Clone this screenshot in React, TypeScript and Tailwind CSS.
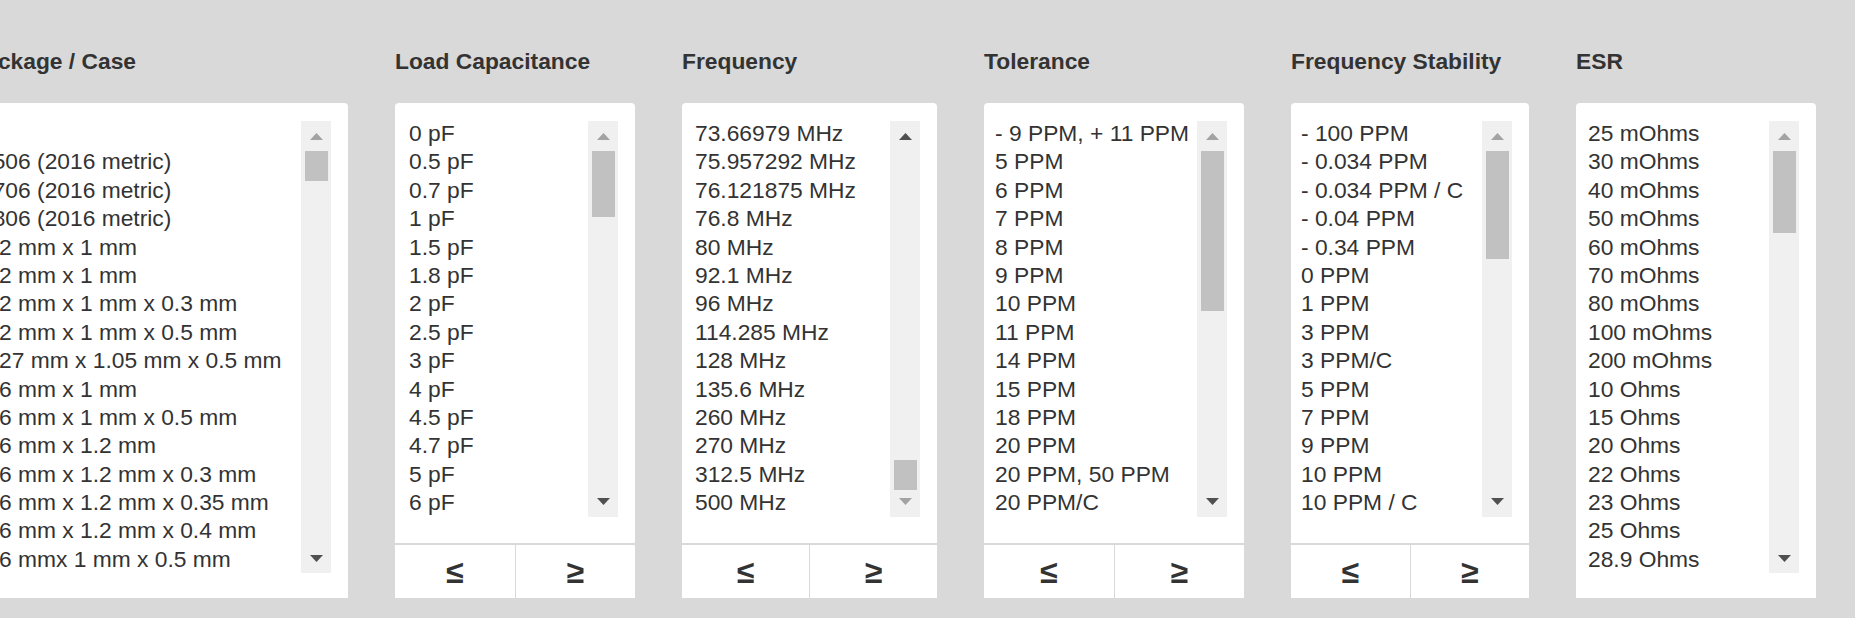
import React from 'react';

type Column = {
    title: string;
    width: number;
    padLeft: number;
    items: string[];
    buttons: boolean;
    thumbTop: number;
    thumbHeight: number;
    upActive: boolean;
    downActive: boolean;
};

const ROW = 28.4;

const columns: Column[] = [
    {
        title: 'Package / Case',
        width: 378,
        padLeft: 10,
        buttons: false,
        thumbTop: 30,
        thumbHeight: 30,
        upActive: false,
        downActive: true,
        items: [
            '-',
            '0506 (2016 metric)',
            '0706 (2016 metric)',
            '0806 (2016 metric)',
            '1.2 mm x 1 mm',
            '1.2 mm x 1 mm',
            '1.2 mm x 1 mm x 0.3 mm',
            '1.2 mm x 1 mm x 0.5 mm',
            '1.27 mm x 1.05 mm x 0.5 mm',
            '1.6 mm x 1 mm',
            '1.6 mm x 1 mm x 0.5 mm',
            '1.6 mm x 1.2 mm',
            '1.6 mm x 1.2 mm x 0.3 mm',
            '1.6 mm x 1.2 mm x 0.35 mm',
            '1.6 mm x 1.2 mm x 0.4 mm',
            '1.6 mmx 1 mm x 0.5 mm',
        ],
    },
    {
        title: 'Load Capacitance',
        width: 240,
        padLeft: 14,
        buttons: true,
        thumbTop: 30,
        thumbHeight: 66,
        upActive: false,
        downActive: true,
        items: ['0 pF', '0.5 pF', '0.7 pF', '1 pF', '1.5 pF', '1.8 pF', '2 pF', '2.5 pF', '3 pF', '4 pF', '4.5 pF', '4.7 pF', '5 pF', '6 pF'],
    },
    {
        title: 'Frequency',
        width: 255,
        padLeft: 13,
        buttons: true,
        thumbTop: 339,
        thumbHeight: 30,
        upActive: true,
        downActive: false,
        items: [
            '73.66979 MHz',
            '75.957292 MHz',
            '76.121875 MHz',
            '76.8 MHz',
            '80 MHz',
            '92.1 MHz',
            '96 MHz',
            '114.285 MHz',
            '128 MHz',
            '135.6 MHz',
            '260 MHz',
            '270 MHz',
            '312.5 MHz',
            '500 MHz',
        ],
    },
    {
        title: 'Tolerance',
        width: 260,
        padLeft: 11,
        buttons: true,
        thumbTop: 30,
        thumbHeight: 160,
        upActive: false,
        downActive: true,
        items: [
            '- 9 PPM, + 11 PPM',
            '5 PPM',
            '6 PPM',
            '7 PPM',
            '8 PPM',
            '9 PPM',
            '10 PPM',
            '11 PPM',
            '14 PPM',
            '15 PPM',
            '18 PPM',
            '20 PPM',
            '20 PPM, 50 PPM',
            '20 PPM/C',
        ],
    },
    {
        title: 'Frequency Stability',
        width: 238,
        padLeft: 10,
        buttons: true,
        thumbTop: 30,
        thumbHeight: 108,
        upActive: false,
        downActive: true,
        items: [
            '- 100 PPM',
            '- 0.034 PPM',
            '- 0.034 PPM / C',
            '- 0.04 PPM',
            '- 0.34 PPM',
            '0 PPM',
            '1 PPM',
            '3 PPM',
            '3 PPM/C',
            '5 PPM',
            '7 PPM',
            '9 PPM',
            '10 PPM',
            '10 PPM / C',
        ],
    },
    {
        title: 'ESR',
        width: 240,
        padLeft: 12,
        buttons: false,
        thumbTop: 30,
        thumbHeight: 82,
        upActive: false,
        downActive: true,
        items: [
            '25 mOhms',
            '30 mOhms',
            '40 mOhms',
            '50 mOhms',
            '60 mOhms',
            '70 mOhms',
            '80 mOhms',
            '100 mOhms',
            '200 mOhms',
            '10 Ohms',
            '15 Ohms',
            '20 Ohms',
            '22 Ohms',
            '23 Ohms',
            '25 Ohms',
            '28.9 Ohms',
        ],
    },
];

const Arrow = ({ up, active }: { up: boolean; active: boolean }) => (
    <svg width="13" height="7" viewBox="0 0 13 7" className={up ? '' : 'rotate-180'}>
        <polygon points="0,7 6.5,0 13,7" fill={active ? '#505050' : '#a3a3a3'} />
    </svg>
);

const ScrollTrack = ({ col }: { col: Column }) => {
    const height = col.items.length * ROW - 2;
    return (
        <div className="w-[30px] shrink-0 bg-[#f0f0f0] flex flex-col" style={{ height }}>
            <div className="h-[30px] flex items-center justify-center">
                <Arrow up active={col.upActive} />
            </div>
            <div className="flex-1 relative">
                <div
                    className="absolute left-[4px] right-[3px] bg-[#c1c1c1]"
                    style={{ top: col.thumbTop - 30, height: col.thumbHeight }}
                />
            </div>
            <div className="h-[30px] flex items-center justify-center">
                <Arrow up={false} active={col.downActive} />
            </div>
        </div>
    );
};

const FilterColumn = ({ col }: { col: Column }) => (
    <div className="shrink-0 flex flex-col" style={{ width: col.width }}>
        <div className="h-[28px] leading-[28px] font-bold text-[#333] whitespace-nowrap mb-[28px]">{col.title}</div>
        <div className={`bg-white rounded-t-[4px] pt-[18px] flex items-start ${col.buttons ? 'h-[440px]' : 'h-[495px]'}`}>
            <div className="flex-1 min-w-0 overflow-hidden -mt-[2px]" style={{ paddingLeft: col.padLeft }}>
                {col.items.map((item, i) => (
                    <div key={i} className="whitespace-nowrap text-[#333]" style={{ height: ROW, lineHeight: `${ROW}px` }}>
                        {item}
                    </div>
                ))}
            </div>
            <div className="mr-[17px]">
                <ScrollTrack col={col} />
            </div>
        </div>
        {col.buttons && (
            <div className="mt-[2px] h-[53px] flex gap-[1px]">
                <button className="flex-1 bg-white font-bold text-[32px] text-[#333] leading-none">≤</button>
                <button className="flex-1 bg-white font-bold text-[32px] text-[#333] leading-none">≥</button>
            </div>
        )}
    </div>
);

export default function App() {
    return (
        <div
            className="w-[1855px] h-[618px] bg-[#d9d9d9] overflow-hidden text-[22.8px]"
            style={{ fontFamily: '"Liberation Sans", Arial, sans-serif' }}
        >
            <div className="flex gap-[47px] pt-[47px] -ml-[30px]">
                {columns.map((col) => (
                    <FilterColumn key={col.title} col={col} />
                ))}
            </div>
        </div>
    );
}
